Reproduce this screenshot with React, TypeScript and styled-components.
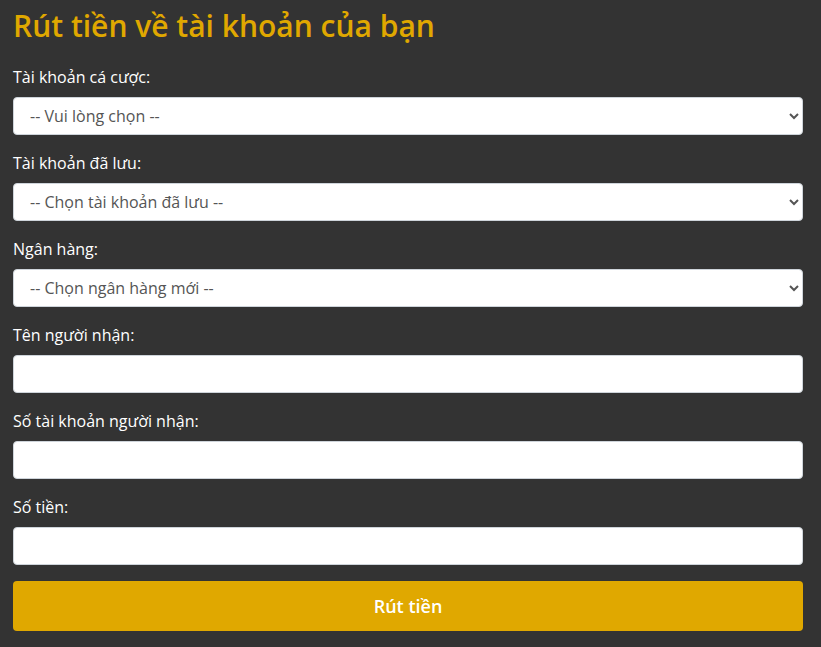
import React from 'react';
import styled, { createGlobalStyle } from 'styled-components';

const GlobalStyle = createGlobalStyle`
  html, body {
    margin: 0;
    padding: 0;
    background-color: #333333;
  }
  body {
    font-family: "Open Sans", "Liberation Sans", sans-serif;
  }
`;

const Page = styled.div`
  background-color: #333333;
  min-height: 647px;
  box-sizing: border-box;
  padding: 8px 18px 16px 13px;
`;

const Title = styled.h1`
  margin: 0 0 21px 0;
  font-size: 30px;
  line-height: 36px;
  font-weight: 600;
  color: #e0a800;
`;

const Field = styled.div`
  margin-bottom: 16px;
`;

const Label = styled.label`
  display: block;
  font-size: 16px;
  line-height: 24px;
  color: #ffffff;
  margin-bottom: 8px;
`;

const controlBase = `
  display: block;
  width: 100%;
  height: 38px;
  box-sizing: border-box;
  border: 1px solid #ced4da;
  border-radius: 4px;
  background-color: #ffffff;
  font-family: "Open Sans", "Liberation Sans", sans-serif;
  font-size: 16px;
  color: #555555;
  outline: none;
`;

const Select = styled.select`
  ${controlBase}
  padding: 0 8px 0 12px;
`;

const Input = styled.input`
  ${controlBase}
  padding: 0 16px;
`;

const SubmitButton = styled.button`
  display: block;
  width: 100%;
  height: 50px;
  border: none;
  border-radius: 4px;
  background-color: #e0a800;
  color: #ffffff;
  font-family: "Open Sans", "Liberation Sans", sans-serif;
  font-size: 18px;
  font-weight: 600;
  cursor: pointer;
`;

const selects = [
  { label: 'Tài khoản cá cược:', placeholder: '-- Vui lòng chọn --' },
  { label: 'Tài khoản đã lưu:', placeholder: '-- Chọn tài khoản đã lưu --' },
  { label: 'Ngân hàng:', placeholder: '-- Chọn ngân hàng mới --' },
];

const inputs = ['Tên người nhận:', 'Số tài khoản người nhận:', 'Số tiền:'];

export default function App() {
  return <Page>
    <GlobalStyle />
    <Title>Rút tiền về tài khoản của bạn</Title>
    { selects.map((s) => (
      <Field key = { s.label }>
        <Label>{ s.label }</Label>
        <Select defaultValue = "">
          <option value = "">{ s.placeholder }</option>
        </Select>
      </Field>
    )) }
    { inputs.map((label) => (
      <Field key = { label }>
        <Label>{ label }</Label>
        <Input type = "text" />
      </Field>
    )) }
    <SubmitButton type = "button">Rút tiền</SubmitButton>
  </Page>;
}
